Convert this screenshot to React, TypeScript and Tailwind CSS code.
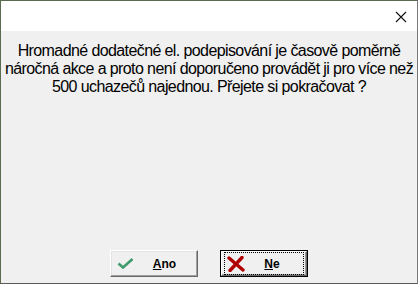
export default function App() {
  return (
    <div className="w-[418px] h-[284px] flex flex-col border border-[#5a6b52] border-r-[#7a7a7a] border-b-[#5a5a5a] bg-[#f0f0f0] font-['Liberation_Sans',Arial,sans-serif] overflow-hidden">
      <div className="h-[30px] shrink-0 bg-white flex items-center justify-end pr-[10px]">
        <svg width="12" height="12" viewBox="0 0 12 12" className="mt-[1px]">
          <path d="M1 1 L11 11 M11 1 L1 11" stroke="#111" strokeWidth="1.1" />
        </svg>
      </div>
      <div className="flex-1 flex flex-col items-center pt-[11px]">
        <p className="text-[16px] leading-[18px] tracking-[-0.6px] text-black text-center whitespace-nowrap">
          Hromadné dodatečné el. podepisování je časově poměrně
          <br />
          náročná akce a proto není doporučeno provádět ji pro více než
          <br />
          500 uchazečů najednou. Přejete si pokračovat ?
        </p>
        <div className="mt-auto mb-[6px] flex gap-[22px]">
          <button className="w-[88px] h-[27px] flex items-center bg-[#f0f0f0] border border-t-white border-l-white border-r-[#696969] border-b-[#696969] shadow-[inset_-1px_-1px_0_#a0a0a0,inset_1px_1px_0_#e3e3e3]">
            <svg width="17" height="11" viewBox="0 0 17 11" className="ml-[6px]">
              <path d="M1.5 5.5 L6 9.5 L15.5 1" fill="none" stroke="#3f9a6c" strokeWidth="2.6" />
            </svg>
            <span className="flex-1 text-center text-[12px] font-bold text-black pr-[2px]">
              <span className="underline">A</span>no
            </span>
          </button>
          <button className="w-[88px] h-[27px] p-[1px] flex bg-black">
            <div className="flex-1 flex items-center bg-[#f0f0f0] border border-t-white border-l-white border-r-[#696969] border-b-[#696969] shadow-[inset_-1px_-1px_0_#a0a0a0]">
              <div className="flex-1 h-full m-[2px] flex items-center border border-dotted border-black">
                <svg width="18" height="16" viewBox="0 0 18 16" className="ml-[2px]">
                  <path d="M2 2 L16 14 M15 1.5 L3 14.5" fill="none" stroke="#b00000" strokeWidth="3.4" strokeLinecap="round" />
                </svg>
                <span className="flex-1 text-center text-[12px] font-bold text-black pr-[4px]">
                  <span className="underline">N</span>e
                </span>
              </div>
            </div>
          </button>
        </div>
      </div>
    </div>
  )
}
